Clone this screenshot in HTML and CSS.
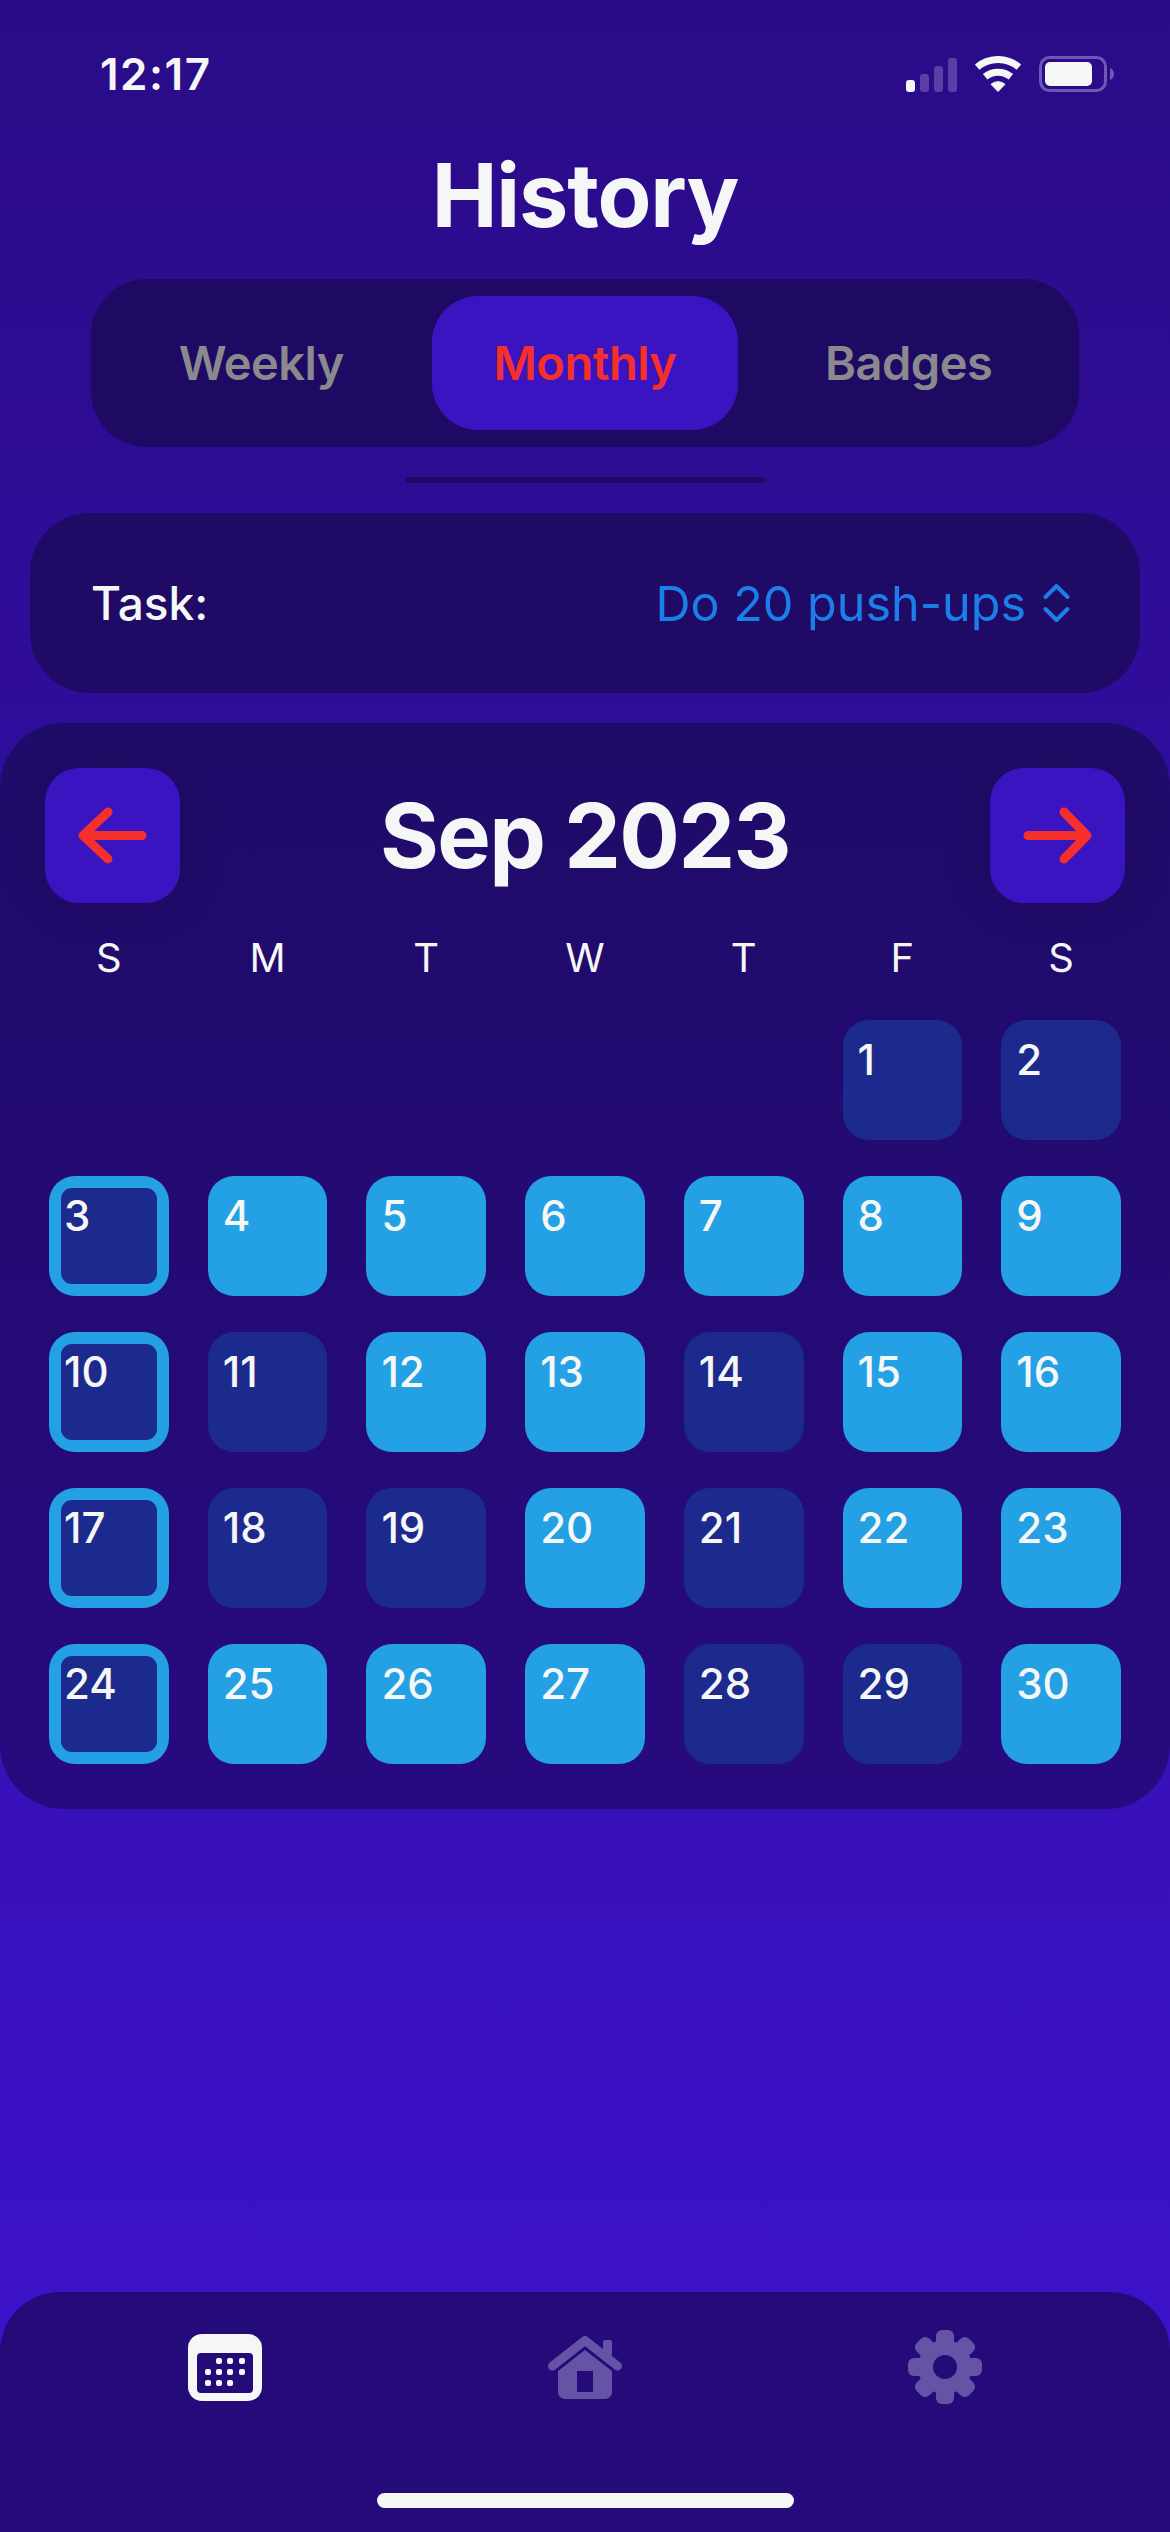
FILE: index.html
```html
<!DOCTYPE html>
<html>
	<head>
		<meta charset="UTF-8">
		<title>History</title>
		<link rel="stylesheet" href="styles.css">
	</head>
	<body>
		<div class="page">

			<!-- status bar -->
			<div class="status">
				<span class="time">12:17</span>
				<div class="status-icons">
					<svg class="signal" width="53" height="36" viewBox="0 0 53 36">
						<rect x="0" y="24" width="9" height="12" rx="3" fill="#f5f7f6"/>
						<rect x="14" y="18" width="9" height="18" rx="3" fill="#5a3ea6"/>
						<rect x="28" y="10" width="9" height="26" rx="3" fill="#5a3ea6"/>
						<rect x="42" y="2" width="9" height="34" rx="3" fill="#5a3ea6"/>
					</svg>
					<svg class="wifi" width="48" height="36" viewBox="0 0 48 36">
						<path d="M3.1 11.1A32.5 32.5 0 0 1 44.9 11.1" fill="none" stroke="#f5f7f6" stroke-width="7"/>
						<path d="M11.1 20.7A20.5 20.5 0 0 1 36.9 20.7" fill="none" stroke="#f5f7f6" stroke-width="7"/>
						<path d="M24 35.5L17 28.3A10.5 10.5 0 0 1 31 28.3Z" fill="#f5f7f6" stroke="#f5f7f6" stroke-linejoin="round"/>
					</svg>
					<svg class="battery" width="76" height="36" viewBox="0 0 76 36">
						<rect x="1.5" y="1.5" width="65" height="33" rx="9" fill="none" stroke="#6f58b4" stroke-width="3"/>
						<rect x="6" y="6" width="47" height="24" rx="5" fill="#f5f7f6"/>
						<path d="M71 12c3 1 4 3.500 4 6s-1 5-4 6z" fill="#6f58b4"/>
					</svg>
				</div>
			</div>

			<h1 class="title">History</h1>

			<!-- weekly / monthly / badges -->
			<div class="tabs">
				<div class="tab">Weekly</div>
				<div class="tab tab-on">Monthly</div>
				<div class="tab">Badges</div>
			</div>
			<div class="divider"></div>

			<!-- task picker -->
			<div class="task">
				<span class="task-label">Task:</span>
				<div class="task-pick">
					<span>Do 20 push-ups</span>
					<svg width="27" height="40" viewBox="0 0 27 40">
						<path d="M2.500 14L13.500 3L24.500 14M2.500 26L13.500 37L24.500 26" fill="none" stroke="#1a7fe8" stroke-width="4" stroke-linecap="round" stroke-linejoin="round"/>
					</svg>
				</div>
			</div>

			<!-- calendar -->
			<div class="calendar">
				<div class="cal-head">
					<div class="arrow-btn">
						<svg width="135" height="135" viewBox="0 0 135 135">
							<path d="M63 44L38 67.500L63 91M38 67.500H97" fill="none" stroke="#f5302c" stroke-width="9" stroke-linecap="round" stroke-linejoin="round"/>
						</svg>
					</div>
					<div class="month">Sep 2023</div>
					<div class="arrow-btn">
						<svg width="135" height="135" viewBox="0 0 135 135">
							<path d="M74 44L97 67.500L74 91M38 67.500H97" fill="none" stroke="#f5302c" stroke-width="9" stroke-linecap="round" stroke-linejoin="round"/>
						</svg>
					</div>
				</div>
				<div class="weekdays">
					<span>S</span><span>M</span><span>T</span><span>W</span><span>T</span><span>F</span><span>S</span>
				</div>
				<div class="days">
					<div class="blank"></div><div class="blank"></div><div class="blank"></div><div class="blank"></div><div class="blank"></div>
					<div class="day">1</div>
					<div class="day">2</div>

					<div class="day today">3</div>
					<div class="day done">4</div>
					<div class="day done">5</div>
					<div class="day done">6</div>
					<div class="day done">7</div>
					<div class="day done">8</div>
					<div class="day done">9</div>

					<div class="day today">10</div>
					<div class="day">11</div>
					<div class="day done">12</div>
					<div class="day done">13</div>
					<div class="day">14</div>
					<div class="day done">15</div>
					<div class="day done">16</div>

					<div class="day today">17</div>
					<div class="day">18</div>
					<div class="day">19</div>
					<div class="day done">20</div>
					<div class="day">21</div>
					<div class="day done">22</div>
					<div class="day done">23</div>

					<div class="day today">24</div>
					<div class="day done">25</div>
					<div class="day done">26</div>
					<div class="day done">27</div>
					<div class="day">28</div>
					<div class="day">29</div>
					<div class="day done">30</div>
				</div>
			</div>

			<!-- bottom bar -->
			<div class="bar">
				<div class="bar-icons">
					<svg width="74" height="67" viewBox="0 0 74 67">
						<rect width="74" height="67" rx="14" fill="#f5f7f6"/>
						<rect x="9" y="19" width="56" height="40" rx="4" fill="#250a7a"/>
						<g fill="#f5f7f6">
							<rect x="28" y="24" width="6" height="6" rx="2"/>
							<rect x="39" y="24" width="6" height="6" rx="2"/>
							<rect x="51" y="24" width="6" height="6" rx="2"/>
							<rect x="17" y="35" width="6" height="6" rx="2"/>
							<rect x="28" y="35" width="6" height="6" rx="2"/>
							<rect x="39" y="35" width="6" height="6" rx="2"/>
							<rect x="51" y="35" width="6" height="6" rx="2"/>
							<rect x="17" y="46" width="6" height="6" rx="2"/>
							<rect x="28" y="46" width="6" height="6" rx="2"/>
							<rect x="39" y="46" width="6" height="6" rx="2"/>
						</g>
					</svg>
					<svg width="74" height="64" viewBox="0 0 74 64">
						<rect x="55" y="5" width="9" height="16" rx="2" fill="#6653a6"/>
						<path d="M4.500 31L37 5.500L69.500 31" fill="none" stroke="#6653a6" stroke-width="9" stroke-linecap="round" stroke-linejoin="round"/>
						<path fill-rule="evenodd" d="M37 15L64 36V57a7 7 0 0 1-7 7H17a7 7 0 0 1-7-7V36ZM29 36v21h16V36Z" fill="#6653a6"/>
					</svg>
					<svg width="74" height="74" viewBox="-37 -37 74 74">
						<g fill="#6653a6">
							<circle r="27"/>
							<rect x="-9" y="-37" width="18" height="20" rx="6"/>
							<rect x="-9" y="-37" width="18" height="20" rx="6" transform="rotate(45)"/>
							<rect x="-9" y="-37" width="18" height="20" rx="6" transform="rotate(90)"/>
							<rect x="-9" y="-37" width="18" height="20" rx="6" transform="rotate(135)"/>
							<rect x="-9" y="-37" width="18" height="20" rx="6" transform="rotate(180)"/>
							<rect x="-9" y="-37" width="18" height="20" rx="6" transform="rotate(225)"/>
							<rect x="-9" y="-37" width="18" height="20" rx="6" transform="rotate(270)"/>
							<rect x="-9" y="-37" width="18" height="20" rx="6" transform="rotate(315)"/>
						</g>
						<circle r="12" fill="#250a7a"/>
					</svg>
				</div>
				<div class="home-line"></div>
			</div>

		</div>
	</body>
</html>
```

FILE: styles.css
```css
*{
	margin: 0;
	padding: 0;
	box-sizing: border-box;
}

body{
	font-family: Inter, "Liberation Sans", sans-serif;
	color: #f5f7f6;
}

.page{
	width: 1170px;
	height: 2532px;
	overflow: hidden;
	display: flex;
	flex-direction: column;
	background: linear-gradient(#2a0b87, #3d13cf);
}

/* status bar */
.status{
	height: 148px;
	flex: none;
	display: flex;
	align-items: center;
	justify-content: space-between;
	padding: 0 55px 0 100px;
}

.time{
	font-size: 44px;
	font-weight: 600;
	letter-spacing: 1.5px;
}

.status-icons{
	display: flex;
	align-items: center;
	gap: 15px;
}

.wifi{
	margin-right: 2px;
}

.title{
	font-size: 88px;
	line-height: 94px;
	font-weight: 700;
	letter-spacing: -1.1px;
	text-align: center;
}

/* tabs */
.tabs{
	width: 988px;
	height: 168px;
	margin: 37px auto 0;
	padding: 17px;
	display: grid;
	grid-template-columns: repeat(3, 1fr);
	gap: 17px;
	background-color: #1e0a62;
	border-radius: 56px;
}

.tab{
	display: flex;
	align-items: center;
	justify-content: center;
	padding-bottom: 2px;
	font-size: 47px;
	font-weight: 600;
	letter-spacing: -0.5px;
	color: #8a8a8e;
	border-radius: 46px;
}

.tab-on{
	color: #f5302c;
	background-color: #3a14c0;
}

.divider{
	width: 360px;
	height: 6px;
	margin: 30px auto 0;
	background-color: #1e0a62;
	border-radius: 3px;
}

/* task */
.task{
	height: 180px;
	margin: 30px 30px 0;
	padding: 0 70px 0 61px;
	display: flex;
	align-items: center;
	justify-content: space-between;
	background-color: #1f0b66;
	border-radius: 60px;
}

.task-label{
	font-size: 46px;
	font-weight: 500;
}

.task-pick{
	display: flex;
	align-items: center;
	gap: 17px;
	font-size: 48.5px;
	color: #1a7fe8;
}

/* calendar */
.calendar{
	margin-top: 30px;
	padding: 45px 49px 45px;
	background: linear-gradient(#1f0b68, #280a80);
	border-radius: 64px;
}

.cal-head{
	margin: 0 -4px;
	display: flex;
	align-items: center;
	justify-content: space-between;
}

.arrow-btn{
	width: 135px;
	height: 135px;
	background-color: #3a14c0;
	border-radius: 34px;
	box-shadow: 0 0 50px rgba(0, 0, 0, 0.14);
}

.month{
	font-size: 90px;
	font-weight: 700;
	letter-spacing: -1.6px;
}

.weekdays{
	margin-top: 30px;
	display: grid;
	grid-template-columns: repeat(7, 1fr);
	column-gap: 39px;
	text-align: center;
	font-size: 40px;
	line-height: 50px;
}

.days{
	margin-top: 37px;
	display: grid;
	grid-template-columns: repeat(7, 1fr);
	grid-auto-rows: 120px;
	gap: 36px 39px;
}

.day{
	padding: 15px 15px;
	font-size: 42px;
	line-height: 50px;
	font-weight: 500;
	background-color: #1b2a8c;
	border-radius: 26px;
}

.done{
	background-color: #24a0e4;
}

/* outlined day: blue frame with the dim square laid over it */
.today{
	position: relative;
	isolation: isolate;
	background-color: #24a0e4;
}

.today::before{
	content: "";
	position: absolute;
	inset: 12px;
	z-index: -1;
	background-color: #1b2a8c;
	border-radius: 11px;
}

/* bottom bar */
.bar{
	height: 240px;
	margin-top: auto;
	display: flex;
	flex-direction: column;
	align-items: center;
	background-color: #250a7a;
	border-radius: 60px 60px 0 0;
}

.bar-icons{
	width: 794px;
	height: 150px;
	flex: none;
	display: flex;
	align-items: center;
	justify-content: space-between;
}

.home-line{
	width: 417px;
	height: 15px;
	margin-top: 51px;
	background-color: #f5f7f6;
	border-radius: 8px;
}
```
